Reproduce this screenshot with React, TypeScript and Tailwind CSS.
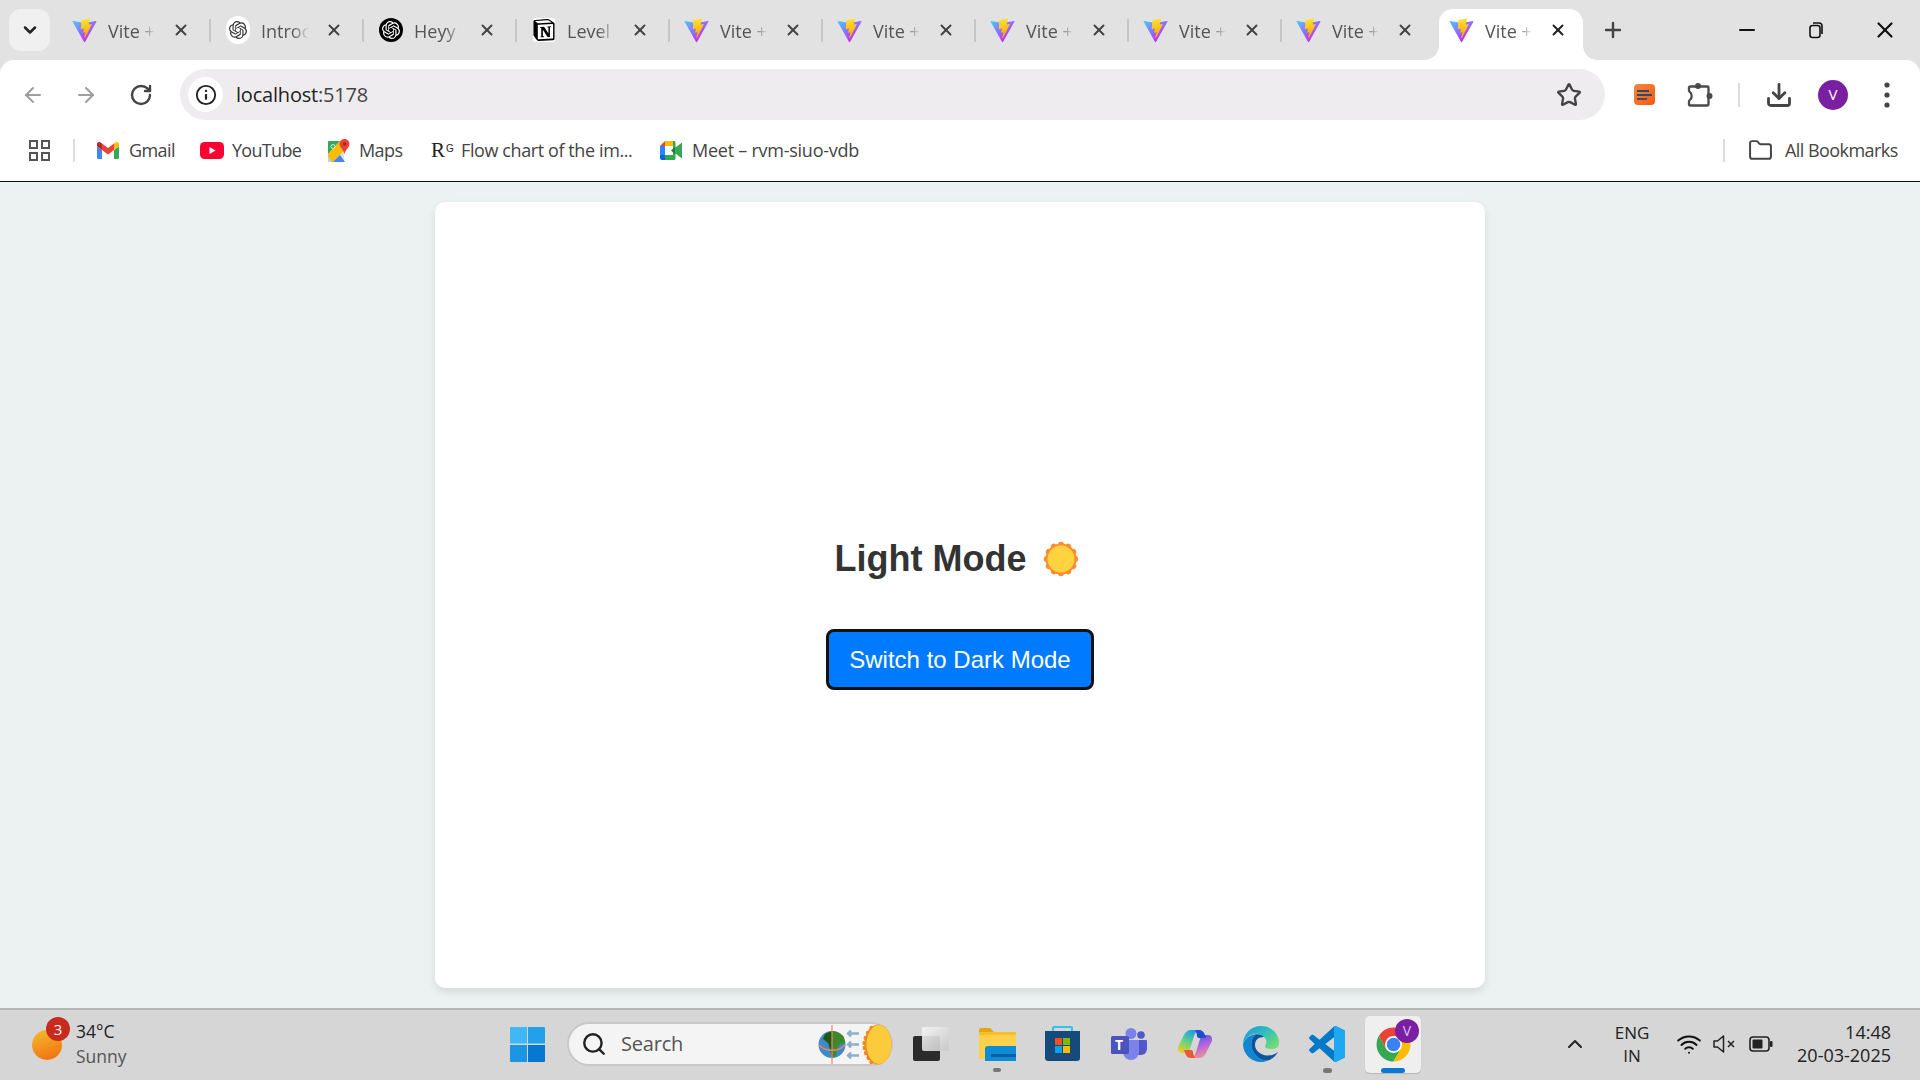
import { ArrowLeft, ArrowRight, RotateCw, Star, Download, X, Plus, ChevronDown, ChevronUp, Minus, Search, Wifi, Folder } from "lucide-react";
import { SiOpenai, SiNotion } from "react-icons/si";

function Vite({ className = "" }: { className?: string }) {
  return (
    <svg viewBox="0 0 410 404" className={className} fill="none">
      <defs>
        <linearGradient id="va" x1="6" y1="33" x2="235" y2="344" gradientUnits="userSpaceOnUse">
          <stop stopColor="#41D1FF" />
          <stop offset="1" stopColor="#BD34FE" />
        </linearGradient>
        <linearGradient id="vb" x1="194" y1="8" x2="236" y2="293" gradientUnits="userSpaceOnUse">
          <stop stopColor="#FFEA83" />
          <stop offset="0.08" stopColor="#FFDD35" />
          <stop offset="1" stopColor="#FFA800" />
        </linearGradient>
      </defs>
      <path d="M399.641 59.5246L215.643 388.545C211.844 395.338 202.084 395.378 198.228 388.618L10.5817 59.5563C6.38087 52.1896 12.6802 43.2665 21.0281 44.7586L205.223 77.6824C206.398 77.8924 207.601 77.8904 208.776 77.6763L389.119 44.8058C397.439 43.2894 403.768 52.1434 399.641 59.5246Z" fill="url(#va)" />
      <path d="M292.965 1.5744L156.801 28.2552C154.563 28.6937 152.906 30.5903 152.771 32.8664L144.395 174.33C144.198 177.662 147.258 180.248 150.51 179.498L188.42 170.749C191.967 169.931 195.172 173.055 194.443 176.622L183.18 231.775C182.422 235.487 185.907 238.661 189.532 237.56L212.947 230.446C216.577 229.344 220.065 232.527 219.297 236.242L201.398 322.875C200.278 328.294 207.486 331.249 210.492 326.603L212.5 323.5L323.454 102.072C325.312 98.3645 322.108 94.137 318.036 94.9228L279.014 102.454C275.347 103.161 272.227 99.746 273.262 96.1583L298.731 7.86689C299.767 4.27314 296.636 0.855181 292.965 1.5744Z" fill="url(#vb)" />
    </svg>
  );
}

function TabIcon({ kind }: { kind: string }) {
  if (kind === "vite") return <Vite className="w-[25px] h-[25px]" />;
  if (kind === "gpt")
    return (
      <div className="w-[24px] h-[28px] rounded-full bg-white flex items-center justify-center">
        <SiOpenai className="w-[18px] h-[20px] text-[#333]" />
      </div>
    );
  if (kind === "gptd")
    return (
      <div className="w-[24px] h-[24px] rounded-full bg-black flex items-center justify-center">
        <SiOpenai className="w-[18px] h-[18px] text-white" />
      </div>
    );
  return <SiNotion className="w-[22px] h-[24px] text-black bg-white rounded-[3px]" />;
}

function Tab({ kind, title, active, noDivider }: { kind: string; title: string; active?: boolean; noDivider?: boolean }) {
  return (
    <div className="relative flex items-center w-[153px] h-[60px] shrink-0 pl-[14px]">
      {active && (
        <>
          <div className="absolute left-[4px] top-[9px] bottom-0 w-[144px] bg-white rounded-t-[14px]" />
          <div className="absolute left-[-10px] bottom-0 w-[14px] h-[14px] bg-[radial-gradient(circle_at_0_0,transparent_13.5px,white_14px)]" />
          <div className="absolute left-[148px] bottom-0 w-[14px] h-[14px] bg-[radial-gradient(circle_at_100%_0,transparent_13.5px,white_14px)]" />
        </>
      )}
      <div className="relative w-[25px] flex justify-center shrink-0">
        <TabIcon kind={kind} />
      </div>
      <div className="relative ml-[11px] w-[48px] shrink-0 overflow-hidden whitespace-nowrap pt-[3px] text-[18px] text-[#555] [mask-image:linear-gradient(to_right,black_65%,transparent_100%)]">
        {title}
      </div>
      <X className={`relative ml-[16px] shrink-0 ${active ? "text-[#222]" : "text-[#444]"}`} size={18} strokeWidth={2.6} />
      {!active && !noDivider && <div className="ml-[19px] w-[2px] h-[23px] shrink-0 bg-[#c6c6c6]" />}
    </div>
  );
}

function Gmail() {
  return (
    <svg viewBox="0 0 22 17" className="w-[22px] h-[17px] shrink-0">
      <path d="M1.5 17H5V8L0 4.2V15.5A1.5 1.5 0 0 0 1.5 17z" fill="#4285F4" />
      <path d="M17 17h3.5a1.5 1.5 0 0 0 1.5-1.5V4.2L17 8z" fill="#34A853" />
      <path d="M17 1.5V8l5-3.8V2.2C22 .4 19.900-.5 18.500.500z" fill="#FBBC04" />
      <path d="M5 8V1.500l6 4.500 6-4.500V8l-6 4.500z" fill="#EA4335" />
      <path d="M0 2.200v2L5 8V1.500L3.500.500C2.100-.5 0 .4 0 2.200z" fill="#C5221F" />
    </svg>
  );
}

function YouTube() {
  return (
    <svg viewBox="0 0 24 17" className="w-[24px] h-[17px] shrink-0">
      <rect width="24" height="17" rx="4.500" fill="#FF0033" />
      <path d="M9.500 5l6 3.500-6 3.500z" fill="#fff" />
    </svg>
  );
}

function Maps() {
  return (
    <svg viewBox="0 0 22 23" className="w-[22px] h-[23px] shrink-0">
      <rect x="0" y="2" width="16" height="21" rx="1" fill="#D6E2EC" />
      <path d="M0 3a1 1 0 0 1 1-1h11L0 15z" fill="#34A853" />
      <path d="M0 15L12 2h2l3 8-5 6-7 7H0z" fill="#FBBC04" />
      <path d="M5 23l7-7 5 7z" fill="#4285F4" />
      <path d="M0 17v6h4z" fill="#C2D2E0" />
      <circle cx="5" cy="7.500" r="2" fill="none" stroke="#DDEFD8" strokeWidth="1" />
      <path d="M16.500 0a5 5 0 0 0-5 5c0 3.500 4 5.500 5 10 1-4.500 5-6.500 5-10a5 5 0 0 0-5-5z" fill="#EA4335" />
      <circle cx="16.500" cy="5" r="1.800" fill="#A52714" />
    </svg>
  );
}

function Meet() {
  return (
    <svg viewBox="0 0 22 19" className="w-[22px] h-[19px] shrink-0">
      <path d="M5 0H13V5H5z" fill="#FBBC04" />
      <path d="M5 0L0 5h5z" fill="#EA4335" />
      <path d="M0 5h5v9H0z" fill="#2684FC" />
      <path d="M0 14h5v5H2a2 2 0 0 1-2-2z" fill="#0066DA" />
      <path d="M5 14h8v5H5z" fill="#34A853" />
      <path d="M13 0h1a1.500 1.500 0 0 1 1.500 1.500V17.500a1.500 1.500 0 0 1-1.500 1.500h-1z" fill="#34A853" />
      <path d="M11 9.500l4.500-4v8z" fill="#188038" />
      <path d="M15.500 6.500L22 1.500v16l-6.500-5z" fill="#34A853" />
    </svg>
  );
}

function Puzzle() {
  return (
    <svg viewBox="0 0 26 24" className="w-[26px] h-[24px] shrink-0" fill="none">
      <path d="M3 3.500H20.500a1 1 0 0 1 1 1V21.500a1 1 0 0 1-1 1H3a1 1 0 0 1-1-1V18Q7.500 13 2 8V4.500a1 1 0 0 1 1-1z" stroke="#4a4a4a" strokeWidth="2.300" strokeLinejoin="round" />
      <circle cx="11" cy="3" r="3" fill="#4a4a4a" />
      <circle cx="22.500" cy="13" r="3" fill="#4a4a4a" />
    </svg>
  );
}

function WinLogo() {
  return (
    <svg viewBox="0 0 35 35" className="w-[35px] h-[35px] shrink-0">
      <path d="M1 0h16v16.500H0V1a1 1 0 0 1 1-1z" fill="#3FB8F5" />
      <path d="M18 0h16a1 1 0 0 1 1 1v15.500H18z" fill="#22A0EA" />
      <path d="M0 18h17v17H1a1 1 0 0 1-1-1z" fill="#1C95E3" />
      <path d="M18 18h17v16a1 1 0 0 1-1 1H18z" fill="#0678D2" />
    </svg>
  );
}

function EarthSun() {
  const spikes = [4, 9, 14, 19, 24, 29, 34, 38];
  return (
    <svg viewBox="0 0 74 41" className="w-[74px] h-[41px] shrink-0">
      <circle cx="14" cy="20.500" r="13.500" fill="#3D8CC6" />
      <path d="M14 7c4 0 9 2 12 6l1 6-5 1-3 5-1 7-4 2z" fill="#3E8A2A" />
      <path d="M14 7l-7 3-2 5 5 4 2 6 2 8z" fill="#1F5A12" />
      <path d="M14 1v39" stroke="#F0836A" strokeWidth="1.200" />
      <path d="M1 21c6 7 20 7 26 0" fill="none" stroke="#F0836A" strokeWidth="1.400" />
      <g stroke="#8FAFC9" strokeWidth="2.400" fill="none">
        <path d="M30 9.500h11M33 6.500l-3 3 3 3" />
        <path d="M30 20.500h11M33 17.500l-3 3 3 3" />
        <path d="M30 31.500h11M33 28.500l-3 3 3 3" />
      </g>
      {spikes.map((y) => (
        <circle key={y} cx={46.500 + Math.pow(Math.abs(y - 21) / 17, 2) * 7} cy={y} r="2.200" fill="#EE8A1E" />
      ))}
      <ellipse cx="60" cy="20.500" rx="13.500" ry="20" fill="#EE8A1E" />
      <ellipse cx="61" cy="20.500" rx="12.500" ry="19.500" fill="#FBCB3C" />
    </svg>
  );
}

function TaskView() {
  return (
    <div className="relative w-[36px] h-[34px] shrink-0">
      <div className="absolute left-0 bottom-0 w-[27px] h-[25px] rounded-[2px] bg-[#2b2b2b]" />
      <div className="absolute right-0 top-0 w-[27px] h-[24px] rounded-[2px] bg-[linear-gradient(135deg,#f6f6f6,#c8c8c8)] opacity-90" />
    </div>
  );
}

function Explorer() {
  return (
    <svg viewBox="0 0 37 34" className="w-[37px] h-[34px] shrink-0">
      <path d="M0 3a2 2 0 0 1 2-2h9l4 4h-15z" fill="#E2A60F" />
      <path d="M0 5h37v27H0z" fill="#FFD04A" />
      <path d="M0 5h37v3H0z" fill="#F5BE2D" />
      <path d="M6 34V22a3 3 0 0 1 3-3h28v15z" fill="#0F8CD6" />
      <path d="M12 27h25v3H12z" fill="#0A5FA8" />
    </svg>
  );
}

function Store() {
  return (
    <svg viewBox="0 0 35 36" className="w-[35px] h-[36px] shrink-0">
      <path d="M8 6V2a1 1 0 0 1 1-1h17a1 1 0 0 1 1 1v4" fill="none" stroke="#2FC4EE" strokeWidth="2" />
      <path d="M0 5h35v27a3 3 0 0 1-3 3H3a3 3 0 0 1-3-3z" fill="#164A7A" />
      <rect x="10" y="12" width="7" height="7" fill="#F25022" />
      <rect x="18" y="12" width="7" height="7" fill="#7FBA00" />
      <rect x="10" y="20" width="7" height="7" fill="#00A4EF" />
      <rect x="18" y="20" width="7" height="7" fill="#FFB900" />
    </svg>
  );
}

function Teams() {
  return (
    <div className="relative w-[36px] h-[32px] shrink-0">
      <svg viewBox="0 0 36 32" className="w-[36px] h-[32px]">
        <circle cx="20" cy="5.500" r="5.500" fill="#7B83EB" />
        <circle cx="30" cy="7" r="3.800" fill="#5059C9" />
        <path d="M25 12h10a1 1 0 0 1 1 1v8a6 6 0 0 1-6 6h-5z" fill="#5059C9" />
        <path d="M11 12h16a1 1 0 0 1 1 1v11a8 8 0 0 1-16 0z" fill="#7B83EB" />
        <rect x="0" y="8" width="18" height="18" rx="1.500" fill="#4B53BC" />
      </svg>
      <span className="absolute left-[4px] top-[9px] text-[14px] leading-[16px] font-bold text-white">T</span>
    </div>
  );
}

function Copilot() {
  return (
    <svg viewBox="0 0 34 30" className="w-[34px] h-[30px] shrink-0">
      <defs>
        <linearGradient id="cpa" x1="0.7" y1="0" x2="0.2" y2="1">
          <stop offset="0" stopColor="#1E9BE8" />
          <stop offset="0.5" stopColor="#5FD08A" />
          <stop offset="1" stopColor="#F2D020" />
        </linearGradient>
        <linearGradient id="cpb" x1="0.4" y1="0" x2="0.7" y2="1">
          <stop offset="0" stopColor="#5A58DC" />
          <stop offset="0.45" stopColor="#B564E0" />
          <stop offset="1" stopColor="#F59A8A" />
        </linearGradient>
      </defs>
      <path d="M13 1h8c-3 1-4 3-5 6l-4 13c-1 3-3 4-5 4H4c-3 0-5-3-4-6L6 6c1-3 4-5 7-5z" fill="url(#cpa)" />
      <path d="M21 29h-8c3-1 4-3 5-6l4-13c1-3 3-4 5-4h3c3 0 5 3 4 6l-6 12c-1 3-4 5-7 5z" fill="url(#cpb)" />
      <path d="M17 1h4c3 0 5 2 6 5l1 3h-6c-1 0-3 0-3-2 0-2-1-4-2-6z" fill="#1F4FC8" />
      <path d="M17 29h-4c-3 0-5-2-6-5l-1-3h6c1 0 3 0 3 2 0 2 1 4 2 6z" fill="#EA5A38" />
    </svg>
  );
}

function Edge() {
  return (
    <svg viewBox="0 0 36 36" className="w-[36px] h-[36px] shrink-0">
      <defs>
        <linearGradient id="eda" x1="0.1" y1="0" x2="1" y2="0.7">
          <stop offset="0" stopColor="#1A9BDC" />
          <stop offset="0.55" stopColor="#35C1B6" />
          <stop offset="1" stopColor="#6FDC74" />
        </linearGradient>
      </defs>
      <path d="M18 0C28 0 36 7 36 17C36 21 33 23 28 23C24 23 22 22 22 20C23 18 24 17 23 14C21 9 15 7 11 8C6 9 2 13 0 18C0 8 8 0 18 0Z" fill="url(#eda)" />
      <path d="M0 18C2 13 6 9 12 8.500C8 13 7 20 10 25C12 30 18 35 25 34.500C22 35.500 20 36 18 36C8 36 0 28 0 18Z" fill="#0F86D2" />
      <path d="M12 8.500C15 7.800 19 8.500 21 11C15 11 12 14 12 19C12 25 18 29 24 29.500C28 29.800 32 28.500 35 26C33 30 29 33 25 34.500C18 35 12 30 10 25C7 20 8 13 12 8.500Z" fill="#0B559F" />
    </svg>
  );
}

function VSCode() {
  return (
    <svg viewBox="0 0 100 100" className="w-[36px] h-[36px] shrink-0">
      <defs>
        <clipPath id="vsr">
          <rect x="69" y="0" width="31" height="100" />
        </clipPath>
      </defs>
      <path fillRule="evenodd" d="M70.9119 99.3171C72.4869 99.9307 74.2828 99.8914 75.8725 99.1264L96.4608 89.2197C98.6242 88.1787 100 85.9892 100 83.5872V16.4133C100 14.0113 98.6243 11.8218 96.4609 10.7808L75.8725 0.873756C73.7862 -0.130129 71.3446 0.11576 69.5135 1.44695C69.252 1.63711 69.0028 1.84943 68.769 2.08341L29.3551 38.0415L12.1872 25.0096C10.589 23.7965 8.35363 23.8959 6.86933 25.2461L1.36303 30.2549C-0.452552 31.9064 -0.454633 34.7627 1.35853 36.417L16.2471 50.0001L1.35853 63.5832C-0.454633 65.2374 -0.452552 68.0938 1.36303 69.7453L6.86933 74.7541C8.35363 76.1043 10.589 76.2037 12.1872 74.9905L29.3551 61.9587L68.769 97.9167C69.3925 98.5406 70.1246 99.0104 70.9119 99.3171ZM75.0152 27.2989L45.1091 50.0001L75.0152 72.7012V27.2989Z" fill="#0078C8" />
      <path clipPath="url(#vsr)" d="M70.9 99.3C72.5 99.9 74.3 99.9 75.9 99.1L96.5 89.2C98.6 88.2 100 86 100 83.6V16.4C100 14 98.6 11.8 96.5 10.8L75.9.9C73.8-.1 71.3.1 69.5 1.4V98.5z" fill="#1FA7F2" />
    </svg>
  );
}

function Chrome() {
  return (
    <svg viewBox="0 0 48 48" className="w-[37px] h-[37px] shrink-0">
      <path d="M24 24L24 13L43.050 13A22 22 0 0 0 4.950 13L14.470 29.500Z" fill="#EA4335" />
      <path d="M24 24L14.470 29.500L4.950 13A22 22 0 0 0 24 46L33.530 29.500Z" fill="#34A853" />
      <path d="M24 24L33.530 29.500L24 46A22 22 0 0 0 43.050 13L24 13Z" fill="#FBBC04" />
      <circle cx="24" cy="24" r="11" fill="#fff" />
      <circle cx="24" cy="24" r="8.800" fill="#3B82F0" />
    </svg>
  );
}

function Sun() {
  const n = 12;
  const d = Array.from({ length: n }, (_, i) => i * (360 / n));
  return (
    <svg viewBox="0 0 36 36" className="w-[36px] h-[36px] shrink-0">
      {d.map((a) => (
        <circle key={a} cx="18" cy="3.700" r="2.900" fill="#FF8C2E" transform={`rotate(${a} 18 18)`} />
      ))}
      <circle cx="18" cy="18" r="15.500" fill="#FF8C2E" />
      <circle cx="18" cy="18" r="13.500" fill="#FFD23F" />
    </svg>
  );
}

export default function App() {
  const F = "font-['Open_Sans','Liberation_Sans',sans-serif]";
  return (
    <div className={`w-[1920px] h-[1080px] flex flex-col overflow-hidden bg-[#e2e2e2] ${F}`}>
      {/* Tab strip */}
      <div className="flex items-center h-[60px] shrink-0">
        <div className="ml-[9px] w-[41px] h-[42px] rounded-[12px] bg-[#f0f0f0] flex items-center justify-center shrink-0">
          <ChevronDown size={20} strokeWidth={3} className="text-[#222]" />
        </div>
        <div className="ml-[8px] flex">
          <Tab kind="vite" title="Vite + React" />
          <Tab kind="gpt" title="Introduction" />
          <Tab kind="gptd" title="Heyy there" />
          <Tab kind="notion" title="Level 1" />
          <Tab kind="vite" title="Vite + React" />
          <Tab kind="vite" title="Vite + React" />
          <Tab kind="vite" title="Vite + React" />
          <Tab kind="vite" title="Vite + React" />
          <Tab kind="vite" title="Vite + React" noDivider />
          <Tab kind="vite" title="Vite + React" active />
        </div>
        <Plus size={24} strokeWidth={2.4} className="ml-[13px] text-[#444] shrink-0" />
        <Minus size={24} strokeWidth={2} className="ml-[110px] text-[#111] shrink-0" />
        <svg viewBox="0 0 16 18" className="ml-[45px] w-[24px] h-[18px] shrink-0" fill="none" stroke="#111" strokeWidth="1.600">
          <rect x="2" y="4.500" width="10" height="12" rx="2.500" />
          <path d="M5 2h6a3 3 0 0 1 3 3v8" />
        </svg>
        <X size={26} strokeWidth={2} className="ml-[44px] text-[#111] shrink-0" />
      </div>

      {/* Toolbar */}
      <div className="flex items-start h-[60px] shrink-0 bg-white rounded-t-[14px] pt-[9px]">
        <div className="flex items-center h-[51px] w-full">
          <ArrowLeft size={24} strokeWidth={2} className="ml-[21px] text-[#9e9e9e] shrink-0" />
          <ArrowRight size={24} strokeWidth={2} className="ml-[29px] text-[#9e9e9e] shrink-0" />
          <RotateCw size={24} strokeWidth={2.4} className="ml-[31px] text-[#444] shrink-0" />
          <div className="ml-[27px] w-[1425px] h-[51px] rounded-full bg-[#eeecee] flex items-center shrink-0">
            <div className="ml-[8px] w-[35px] h-[35px] rounded-full bg-white flex items-center justify-center shrink-0">
              <svg viewBox="0 0 24 24" className="w-[22px] h-[22px]" fill="none" stroke="#222" strokeWidth="2">
                <circle cx="12" cy="12" r="10" />
                <path d="M12 11v6" strokeWidth="2.400" />
                <circle cx="12" cy="7.500" r="1.300" fill="#222" stroke="none" />
              </svg>
            </div>
            <span className="ml-[13px] text-[20px] tracking-[-0.2px] text-[#222]">
              localhost<span className="text-[#444]">:5178</span>
            </span>
            <Star size={26} strokeWidth={2.2} className="ml-auto mr-[23px] text-[#444] shrink-0" />
          </div>
          <div className="ml-[29px] w-[21px] h-[21px] rounded-[4px] bg-[linear-gradient(135deg,#f6873f,#f45a12)] flex flex-col items-start justify-center gap-[2px] pl-[3px] shrink-0">
            <div className="w-[12px] h-[2px] bg-[#2f4a6a]" />
            <div className="w-[15px] h-[2px] bg-[#2f4a6a]" />
            <div className="w-[10px] h-[2px] bg-[#5a4a4a]" />
          </div>
          <div className="ml-[32px] shrink-0"><Puzzle /></div>
          <div className="ml-[25px] w-[2px] h-[24px] bg-[#dcdcdc] shrink-0" />
          <Download size={28} strokeWidth={2.4} className="ml-[25px] text-[#444] shrink-0" />
          <div className="ml-[25px] w-[30px] h-[30px] rounded-full bg-[#7b1fa2] text-white flex items-center justify-center text-[15px] shrink-0">V</div>
          <svg viewBox="0 0 8 28" className="ml-[35px] w-[8px] h-[28px] shrink-0" fill="#444">
            <circle cx="4" cy="4" r="2.600" />
            <circle cx="4" cy="14" r="2.600" />
            <circle cx="4" cy="24" r="2.600" />
          </svg>
        </div>
      </div>

      {/* Bookmarks */}
      <div className="flex items-center h-[61px] pb-[1px] shrink-0 bg-white text-[18px] tracking-[-0.4px] text-[#444] whitespace-nowrap">
        <svg viewBox="0 0 21 21" className="ml-[29px] w-[21px] h-[21px] shrink-0" fill="none" stroke="#555" strokeWidth="2">
          <rect x="1" y="1" width="7" height="7" />
          <rect x="13" y="1" width="7" height="7" />
          <rect x="1" y="13" width="7" height="7" />
          <rect x="13" y="13" width="7" height="7" />
        </svg>
        <div className="ml-[23px] w-[2px] h-[23px] bg-[#dcdcdc] shrink-0" />
        <div className="ml-[22px]"><Gmail /></div>
        <span className="ml-[10px] w-[45px] tracking-[-0.6px]">Gmail</span>
        <div className="ml-[26px]"><YouTube /></div>
        <span className="ml-[8px] w-[69px] tracking-[-0.7px]">YouTube</span>
        <div className="ml-[27px]"><Maps /></div>
        <span className="ml-[9px] w-[43px] tracking-[-0.6px]">Maps</span>
        <span className="ml-[29px] w-[19px] font-['Liberation_Serif',serif] text-[21px] leading-none tracking-normal text-[#222]">
          R<sup className="ml-[1px] font-['Liberation_Sans',sans-serif] text-[10px]">G</sup>
        </span>
        <span className="ml-[11px] w-[171px]">Flow chart of the im...</span>
        <div className="ml-[28px]"><Meet /></div>
        <span className="ml-[10px] w-[166px] tracking-[-0.25px]">Meet – rvm-siuo-vdb</span>
        <div className="ml-[865px] w-[2px] h-[23px] bg-[#dcdcdc] shrink-0" />
        <Folder size={25} strokeWidth={1.9} className="ml-[23px] text-[#444] shrink-0" />
        <span className="ml-[12px] tracking-[-0.55px]">All Bookmarks</span>
      </div>
      <div className="h-px shrink-0 bg-[#111]" />

      {/* Page */}
      <div className="flex-1 min-h-0 bg-[#ecf1f2] p-[20px] flex justify-center font-['Liberation_Sans',Arial,sans-serif]">
        <div className="w-[1050px] h-full bg-white rounded-[10px] shadow-[0_4px_8px_rgba(0,0,0,0.1)] flex flex-col items-center justify-center">
          <h1 className="mt-[38px] mb-[50px] flex items-center h-[41px] text-[36px] leading-[41px] font-bold text-[#333]">
            Light Mode
            <span className="ml-[17px] mr-[6px]"><Sun /></span>
          </h1>
          <button className="w-[268px] h-[61px] rounded-[8px] border-[3px] border-[#111] bg-[#007bff] text-[24px] text-white">
            Switch to Dark Mode
          </button>
        </div>
      </div>

      {/* Taskbar */}
      <div className="h-[72px] pb-[2px] shrink-0 flex items-center border-t-2 border-[#b6b6b6] bg-[#d6d6d6] text-[#222]">
        <div className="relative ml-[32px] w-[30px] h-[30px] mt-[2px] shrink-0 rounded-full bg-[linear-gradient(160deg,#f4bd2e,#f26a0e)]">
          <div className="absolute left-[14px] top-[-13px] w-[24px] h-[24px] rounded-full bg-[#c92a1e] text-white text-[15px] leading-[24px] text-center">3</div>
        </div>
        <div className="ml-[14px] w-[51px] shrink-0 text-[17.5px] leading-[25px]">
          <div>34°C</div>
          <div className="text-[#555]">Sunny</div>
        </div>
        <div className="ml-[383px]"><WinLogo /></div>
        <div className="ml-[22px] w-[326px] h-[44px] rounded-full bg-[#f4f4f4] border-2 border-[#c8c8c8] flex items-center shrink-0">
          <Search size={26} strokeWidth={2.2} className="ml-[12px] text-[#222] shrink-0" />
          <span className="ml-[14px] text-[20px] tracking-[-0.2px] text-[#555]">Search</span>
          <div className="ml-auto mr-[-1px]"><EarthSun /></div>
        </div>
        <div className="ml-[20px]"><TaskView /></div>
        <div className="relative ml-[30px]">
          <Explorer />
          <div className="absolute left-[14px] top-[41px] w-[8px] h-[4px] rounded-full bg-[#777]" />
        </div>
        <div className="ml-[29px]"><Store /></div>
        <div className="ml-[31px]"><Teams /></div>
        <div className="ml-[31px]"><Copilot /></div>
        <div className="ml-[31px]"><Edge /></div>
        <div className="relative ml-[30px]">
          <VSCode />
          <div className="absolute left-[14px] top-[42px] w-[9px] h-[5px] rounded-full bg-[#777]" />
        </div>
        <div className="relative ml-[20px] w-[56px] h-[57px] rounded-[5px] bg-[#efefef] shadow-[0_1px_1px_rgba(0,0,0,0.15)] flex items-center pl-[10px] shrink-0">
          <Chrome />
          <div className="absolute left-[30px] top-[3px] w-[24px] h-[24px] rounded-full bg-[#7b1fa2] text-[#d8c0e8] text-[14px] leading-[24px] text-center">V</div>
          <div className="absolute left-[16px] bottom-0 w-[24px] h-[5px] rounded-full bg-[#0a78d4]" />
        </div>
        <ChevronUp size={24} strokeWidth={2} className="ml-[142px] text-[#222] shrink-0" />
        <div className="ml-[20px] w-[50px] shrink-0 text-center text-[17px] leading-[23px]">
          <div>ENG</div>
          <div>IN</div>
        </div>
        <Wifi size={26} strokeWidth={1.8} className="ml-[19px] text-[#111] shrink-0" />
        <svg viewBox="0 0 23 20" className="ml-[11px] w-[23px] h-[20px] shrink-0" fill="none" stroke="#222" strokeWidth="1.500">
          <path d="M1 7v6h3.500l6 5V2l-6 5z" strokeLinejoin="round" />
          <path d="M15 7l6 6M21 7l-6 6" />
        </svg>
        <svg viewBox="0 0 24 16" className="ml-[13px] w-[24px] h-[16px] shrink-0">
          <rect x="1" y="1" width="19" height="14" rx="3" fill="none" stroke="#222" strokeWidth="1.600" />
          <rect x="3.500" y="3.500" width="10" height="9" rx="1" fill="#222" />
          <rect x="21" y="5" width="2.500" height="6" rx="1" fill="#222" />
        </svg>
        <div className="flex-1 pr-[29px] text-right text-[18px] leading-[23px]">
          <div>14:48</div>
          <div>20-03-2025</div>
        </div>
      </div>
    </div>
  );
}
